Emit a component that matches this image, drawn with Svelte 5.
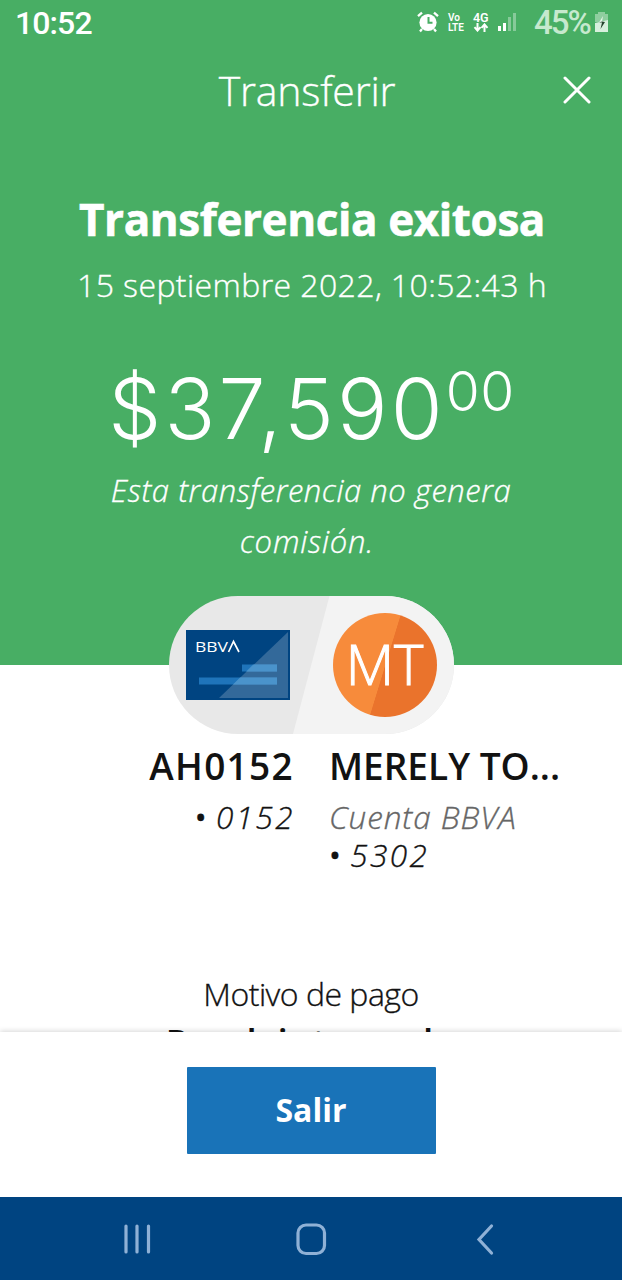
<script>
    const transfer = {
        title: 'Transferencia exitosa',
        date: '15 septiembre 2022, 10:52:43 h',
        amount: '$37,590',
        cents: '00',
        fee: ['Esta transferencia no genera', 'comisión.'],
        concept: 'Pend. internado'
    };
    const signal = [3, 6, 12, 16];
</script>

<main class="screen">
    <section class="hero">
        <div class="status">
            <span class="clock">10:52</span>
            <div class="indicators">
                <svg class="alarm" viewBox="0 0 22 22">
                    <circle cx="11" cy="11.5" r="8.6" fill="#fff" />
                    <path d="M1 5.2 5 1.6M21 5.2l-4-3.6M5 18l-2 2.4M17 18l2 2.4" stroke="#fff" stroke-width="2.3" />
                    <path d="M11.5 6v5.8h4" fill="none" stroke="#48ae64" stroke-width="2" />
                </svg>
                <span class="tiny volte"><span>Vo</span><span>LTE</span></span>
                <span class="tiny net">
                    4G
                    <svg viewBox="0 0 16 9">
                        <path d="M4.5 0v7M1.5 4.2l3 3.4 3-3.4M11.5 9V2M8.5 4.8l3-3.4 3 3.4" fill="none" stroke="#fff" stroke-width="2" />
                    </svg>
                </span>
                <div class="signal">
                    {#each signal as h, i}
                        <i class:off={i > 1} style="height: {h + 2}px"></i>
                    {/each}
                </div>
                <span class="percent">45%</span>
                <svg class="battery" viewBox="0 0 15 22">
                    <path d="M4 1h7v2h3v8H1V3h3z" fill="#8fce9f" />
                    <path d="M1 12 14 9v12H1z" fill="#d8f0dd" />
                    <path d="M9 5 5 11.500h3L6.500 18l4.500-7.500H8z" fill="#e8f6eb" />
                    <path d="M5 11.500h3L6.500 18l4.500-7-3-.5z" fill="#24432c" />
                </svg>
            </div>
        </div>

        <header>
            <h2>Transferir</h2>
            <svg class="close" viewBox="0 0 28 28">
                <path d="M2 2l24 24M26 2 2 26" stroke="#fff" stroke-width="3" stroke-linecap="round" />
            </svg>
        </header>

        <h1>{transfer.title}</h1>
        <p class="date">{transfer.date}</p>
        <div class="amount"><span>{transfer.amount}</span><sup>{transfer.cents}</sup></div>
        <p class="fee">
            {#each transfer.fee as line}
                <span>{line}</span>
            {/each}
        </p>
    </section>

    <section class="details">
        <div class="pill">
            <svg class="split" viewBox="0 0 285 138">
                <path d="M160.500 0H285v138H124z" fill="#f3f3f3" />
            </svg>
            <svg class="card" viewBox="0 0 104 70">
                <path d="M0 0h104v70H0z" fill="#004481" />
                <path d="M56 34.500h35v7H56zM13 47.500h78v7H13z" fill="#1f74ba" />
                <path d="M102 2v66H33z" fill="#fff" opacity=".2" />
                <path d="M67 34.500h24v7H60zM54 47.500h37v7H47z" fill="#4a94cd" opacity=".7" />
                <text x="9" y="22" textLength="33" lengthAdjust="spacingAndGlyphs">BBV</text>
                <path d="m42.500 22 5-10.500 5.500 10.500" fill="none" stroke="#fff" stroke-width="1.700" />
            </svg>
            <div class="avatar"><span>MT</span></div>
        </div>

        <div class="parties">
            <div class="party from">
                <strong>AH0152</strong>
                <em class="number"><b>•</b>0152</em>
            </div>
            <div class="party">
                <strong>MERELY TO...</strong>
                <em class="bank">Cuenta BBVA</em>
                <em class="number"><b>•</b>5302</em>
            </div>
        </div>

        <div class="concept">
            <span>Motivo de pago</span>
            <strong>{transfer.concept}</strong>
        </div>
    </section>

    <footer>
        <button>Salir</button>
    </footer>

    <nav>
        <svg viewBox="0 0 34 34"><path d="M6 4v26M17 4v26M28.500 4v26" /></svg>
        <svg viewBox="0 0 34 34"><rect x="4" y="3" width="26.500" height="28.500" rx="8" /></svg>
        <svg viewBox="0 0 34 34"><path d="M23.500 4 11 17.500 23.500 31" /></svg>
    </nav>
</main>

<style>
    :global(body) { margin: 0; }
    .screen {
        width: 622px;
        height: 1280px;
        display: flex;
        flex-direction: column;
        overflow: hidden;
        background: #fff;
        font-family: "Open Sans", "Noto Sans", sans-serif;
        font-weight: 300;
        white-space: nowrap;
    }
    h1, h2, p { margin: 0; }
    h2, .date, .fee, .party em, .concept span { -webkit-text-stroke: 0.35px currentColor; }

    .hero {
        height: 665px;
        flex: none;
        background: #48ae64;
        color: #fff;
        text-align: center;
    }
    .status {
        display: flex;
        justify-content: space-between;
        height: 46px;
        padding: 0 13px 0 15px;
        font-family: Roboto, sans-serif;
        line-height: 46px;
    }
    .clock { font-size: 32px; font-weight: 500; letter-spacing: -0.9px; }
    .indicators { display: flex; align-items: center; }
    .alarm { width: 22px; height: 22px; margin-right: 9px; margin-top: -3px; }
    .tiny {
        width: 17px;
        font-size: 10px;
        font-weight: 600;
        line-height: 9px;
        text-align: left;
        margin-top: -2px;
    }
    .volte { display: flex; flex-direction: column; gap: 1px; margin-right: 8px; font-size: 10px; }
    .net { font-size: 12.5px; margin-right: 8px; }
    .net svg { display: block; width: 16px; height: 9px; margin-top: 1px; }
    .signal { display: flex; align-items: flex-end; gap: 2px; height: 18px; width: 21px; margin: -2px 15px 0 0; }
    .signal i { width: 3px; background: #fff; }
    .signal i.off { opacity: 0.35; }
    .percent { font-size: 33px; font-weight: 500; color: #c6e9ce; letter-spacing: -1.9px; }
    .battery { width: 15px; height: 22px; margin: -3px 0 0 4px; }

    header {
        display: flex;
        align-items: center;
        justify-content: center;
        position: relative;
        height: 88px;
        padding-right: 8px;
    }
    h2 { font-size: 41px; font-weight: 300; letter-spacing: -0.2px; }
    .close { position: absolute; right: 31px; top: 30px; width: 28px; height: 28px; }

    h1 {
        margin-top: 54px;
        padding-left: 2px;
        font-size: 44px;
        font-weight: 700;
        line-height: 62px;
        letter-spacing: -0.4px;
        -webkit-text-stroke: 0.6px #fff;
    }
    .date { margin-top: 10px; padding-left: 2px; font-size: 32px; line-height: 50px; letter-spacing: 0.4px; }
    .amount {
        display: flex;
        justify-content: center;
        height: 110px;
        margin-top: 41px;
        padding-left: 1px;
        font-family: Inter, sans-serif;
        font-weight: 300;
        font-size: 84px;
        line-height: 115px;
        letter-spacing: 3.2px;
    }
    .amount sup { font-size: 55px; line-height: 80px; letter-spacing: 0.5px; vertical-align: top; }
    .fee { margin-top: 4px; font-size: 31px; line-height: 51px; font-style: italic; letter-spacing: 0.55px; }
    .fee span { display: block; }
    .fee span + span { padding-right: 8px; letter-spacing: 0.8px; }

    .details {
        display: flex;
        flex-direction: column;
        align-items: center;
        height: 367px;
        flex: none;
        color: #121212;
    }
    .pill {
        position: relative;
        display: flex;
        align-items: center;
        box-sizing: border-box;
        flex: none;
        width: 285px;
        height: 138px;
        margin-top: -69px;
        padding: 0 17px;
        justify-content: space-between;
        border-radius: 69px;
        background: #e8e8e8;
        overflow: hidden;
    }
    .split { position: absolute; inset: 0; }
    .card { position: relative; width: 104px; height: 70px; }
    .card text { font: 500 15px "Open Sans", sans-serif; fill: #fff; }
    .avatar {
        position: relative;
        width: 104px;
        height: 104px;
        border-radius: 50%;
        background: linear-gradient(107deg, #f78b3b 50%, #ea732c 50.5%);
        color: #fff;
        font-size: 56px;
        line-height: 101px;
        text-align: center;
        -webkit-text-stroke: 1px #fff;
    }
    .parties {
        display: grid;
        grid-template-columns: 293px 293px;
        column-gap: 36px;
        flex: none;
        width: 622px;
        height: 206px;
        margin-top: 8px;
    }
    .party { display: flex; flex-direction: column; }
    .from { align-items: flex-end; }
    .party strong { font-size: 37px; font-weight: 600; line-height: 48px; }
    .from strong { letter-spacing: 1.3px; margin-right: -1px; }
    .party em { font-size: 31.5px; line-height: 38px; margin-top: 8px; }
    .party em + em { margin-top: 0; }
    .party b { font-style: normal; font-weight: 400; margin-right: 7px; }
    .party .number { letter-spacing: 2.4px; }
    .from .number { margin-right: -2px; }
    .party .bank { color: #666; letter-spacing: 0.9px; }

    .concept {
        display: flex;
        flex-direction: column;
        align-items: center;
        flex: none;
        font-size: 32px;
        line-height: 50px;
        margin-top: 21px;
    }
    .concept span { letter-spacing: -0.5px; }
    /* runs under the footer, only its top edge shows */
    .concept strong { margin-top: -1px; font-size: 37px; font-weight: 600; line-height: 50px; letter-spacing: 0.3px; }

    footer {
        position: relative;
        display: flex;
        justify-content: center;
        align-items: flex-start;
        flex: none;
        height: 165px;
        background: #fff;
        box-shadow: 0 -1px 5px rgba(0, 0, 0, 0.16);
    }
    button {
        width: 249px;
        height: 87px;
        margin-top: 35px;
        padding: 0 0 3px;
        border: 0;
        border-radius: 1px;
        background: #1973b8;
        color: #fff;
        font: 700 32px "Open Sans", sans-serif;
    }
    nav {
        position: relative;
        display: flex;
        justify-content: space-between;
        align-items: center;
        flex: 1;
        padding: 0 120px;
        background: #004481;
    }
    nav svg { width: 34px; height: 34px; }
    nav path, nav rect { fill: none; stroke: #8fb1d6; stroke-width: 3.2; stroke-linecap: round; }
</style>
